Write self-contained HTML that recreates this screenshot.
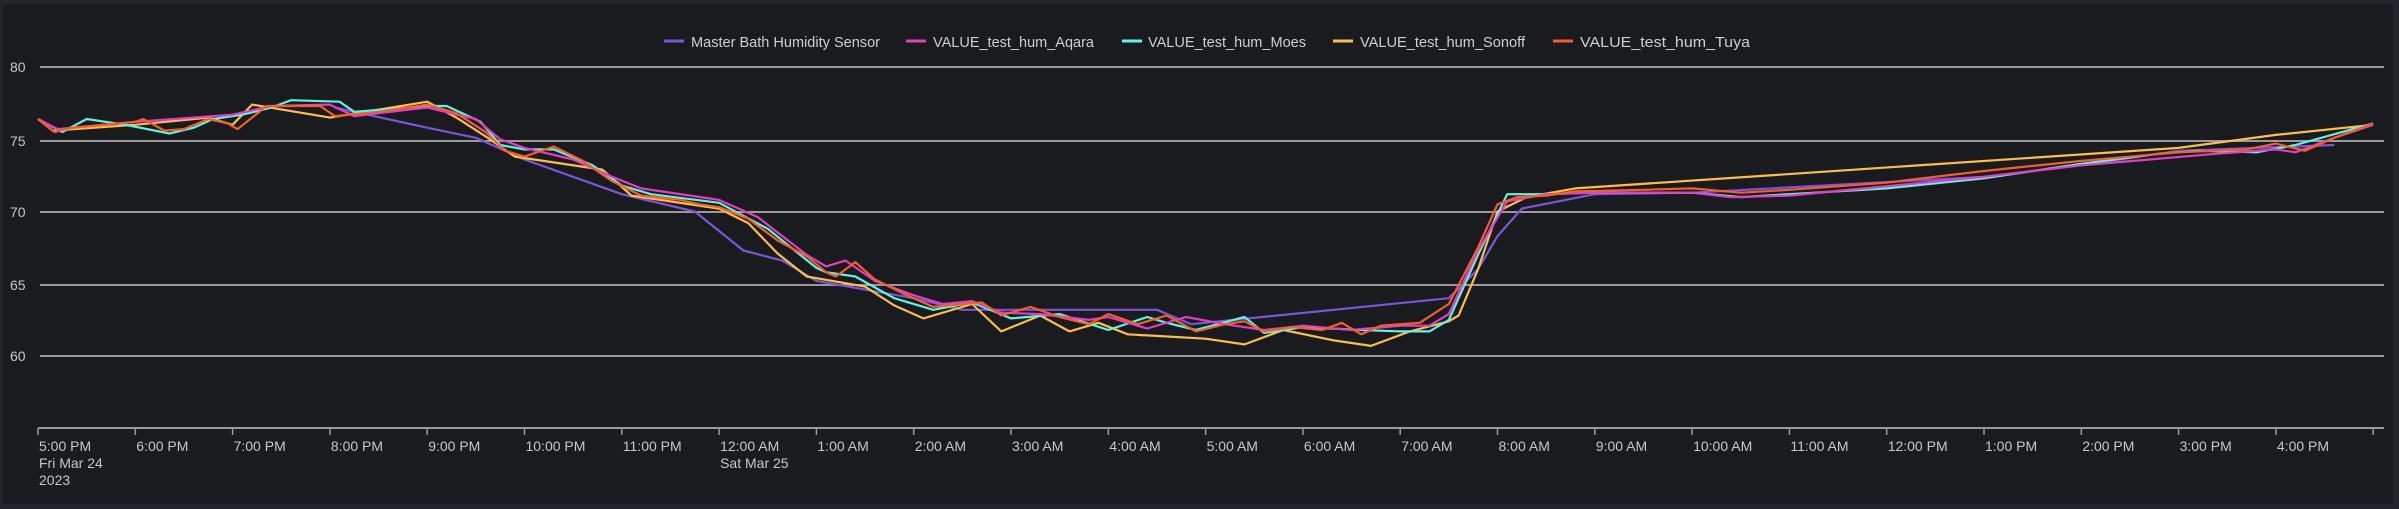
<!DOCTYPE html>
<html><head><meta charset="utf-8"><style>
html,body{margin:0;padding:0;background:#22252a;}
body{width:2399px;height:509px;overflow:hidden;position:relative;font-family:"Liberation Sans",sans-serif;}
#panel{position:absolute;left:3px;top:4px;width:2390px;height:500px;background:#1a1b1e;}
svg{position:absolute;left:0;top:0;}
</style></head><body>
<div id="panel"></div>
<svg id="c" width="2399" height="509" xmlns="http://www.w3.org/2000/svg" font-family="Liberation Sans, sans-serif">
<g stroke="#9a9a9a" stroke-width="2">
<line x1="40" y1="67" x2="2384" y2="67"/>
<line x1="40" y1="141" x2="2384" y2="141"/>
<line x1="40" y1="212" x2="2384" y2="212"/>
<line x1="40" y1="285" x2="2384" y2="285"/>
<line x1="40" y1="356" x2="2384" y2="356"/>
<line x1="38" y1="428" x2="2384" y2="428"/>
</g>
<g fill="#c8c8c8" font-size="14">
<text x="10" y="72">80</text><text x="10" y="146">75</text><text x="10" y="217">70</text><text x="10" y="290">65</text><text x="10" y="361">60</text>
</g>
<g id="ticks" stroke="#9a9a9a" stroke-width="1.5"></g>
<g id="lbl" fill="#c8c8c8" font-size="14"></g>
<g id="lines" fill="none" stroke-width="2.2" stroke-linejoin="round"></g>
<g font-size="15" fill="#cfcfcf">
<line x1="664" y1="41" x2="684" y2="41" stroke="#7b55d8" stroke-width="3"/><text x="691" y="47" textLength="189" lengthAdjust="spacingAndGlyphs">Master Bath Humidity Sensor</text>
<line x1="906" y1="41" x2="926" y2="41" stroke="#e040c0" stroke-width="3"/><text x="933" y="47" textLength="161" lengthAdjust="spacingAndGlyphs">VALUE_test_hum_Aqara</text>
<line x1="1122" y1="41" x2="1142" y2="41" stroke="#5ff3e4" stroke-width="3"/><text x="1148" y="47" textLength="158" lengthAdjust="spacingAndGlyphs">VALUE_test_hum_Moes</text>
<line x1="1333" y1="41" x2="1353" y2="41" stroke="#fbbd4e" stroke-width="3"/><text x="1360" y="47" textLength="165" lengthAdjust="spacingAndGlyphs">VALUE_test_hum_Sonoff</text>
<line x1="1553" y1="41" x2="1573" y2="41" stroke="#f25f2a" stroke-width="3"/><text x="1580" y="47" textLength="170" lengthAdjust="spacingAndGlyphs">VALUE_test_hum_Tuya</text>
</g>
</svg>
<script>
var NS="http://www.w3.org/2000/svg";
function X(t){return 38+97.3*t;}function Y(v){return 356-(v-60)*14.45;}
var labels=["5:00 PM","6:00 PM","7:00 PM","8:00 PM","9:00 PM","10:00 PM","11:00 PM","12:00 AM","1:00 AM","2:00 AM","3:00 AM","4:00 AM","5:00 AM","6:00 AM","7:00 AM","8:00 AM","9:00 AM","10:00 AM","11:00 AM","12:00 PM","1:00 PM","2:00 PM","3:00 PM","4:00 PM",""];
var tg=document.getElementById("ticks"),lg=document.getElementById("lbl");
function txt(x,y,s){var e=document.createElementNS(NS,"text");e.setAttribute("x",x);e.setAttribute("y",y);e.textContent=s;lg.appendChild(e);}
for(var i=0;i<=24;i++){var x=X(i);var l=document.createElementNS(NS,"line");l.setAttribute("x1",x);l.setAttribute("x2",x);l.setAttribute("y1",428);l.setAttribute("y2",435);tg.appendChild(l);if(labels[i])txt(x+1,451,labels[i]);}
txt(39,468,"Fri Mar 24");txt(39,485,"2023");txt(X(7)+1,468,"Sat Mar 25");
var S={
"#7b55d8":[[3.05,77.2],[4,75.8],[4.5,75.1],[5,73.6],[6,71.2],[6.75,70],[7.25,67.3],[7.65,66.6],[8,65.2],[9,64],[9.5,63.2],[11.5,63.2],[11.85,62.2],[14.5,64],[14.8,66],[15,68.3],[15.25,70.2],[16,71.2],[17,71.3],[20,72.4],[21,73.2],[22,74.2],[23.6,74.6]],
"#fbbd4e":[[0,76.4],[0.15,75.6],[1,76],[1.75,76.5],[2,76],[2.2,77.4],[3,76.5],[4,77.6],[4.3,76.5],[4.6,75.2],[4.9,73.8],[5.8,72.9],[6.1,71.1],[7,70.2],[7.3,69.2],[7.6,67.1],[7.9,65.5],[8.5,64.8],[8.8,63.5],[9.1,62.6],[9.6,63.6],[9.9,61.7],[10.3,62.8],[10.6,61.7],[10.9,62.3],[11.2,61.5],[12,61.2],[12.4,60.8],[12.8,61.8],[13.3,61.1],[13.7,60.7],[14.1,61.7],[14.5,62.4],[14.6,62.8],[14.8,66],[15,70],[15.3,71],[15.8,71.6],[22,74.4],[23,75.3],[24,76]],
"#5ff3e4":[[0,76.4],[0.25,75.5],[0.5,76.4],[0.9,76],[1.35,75.4],[1.6,75.8],[1.8,76.4],[2.1,76.7],[2.4,77.2],[2.6,77.7],[3.1,77.6],[3.25,76.9],[4,77.3],[4.2,77.3],[4.55,76.2],[4.75,74.6],[5,74.3],[5.3,74.3],[5.7,73.2],[6,71.8],[6.3,71.2],[7,70.6],[7.5,68.8],[8,66.1],[8.1,65.8],[8.4,65.5],[8.8,64],[9.2,63.2],[9.6,63.7],[10,62.6],[10.5,62.9],[11,61.8],[11.4,62.7],[11.6,62.3],[11.9,61.8],[12.4,62.7],[12.6,61.6],[13,62],[13.6,61.8],[14,61.7],[14.3,61.7],[14.5,62.5],[14.8,67],[15.1,71.2],[15.5,71.2],[16,71.3],[17,71.3],[17.5,71],[18,71.2],[19,71.6],[20,72.3],[21,73.3],[21.8,74],[22.2,74.2],[22.8,74.1],[23.2,74.6],[24,76.1]],
"#e040c0":[[0,76.4],[0.2,75.7],[1,76.2],[2,76.7],[2.4,77.3],[3,77.4],[3.25,76.6],[4,77.2],[4.5,76.4],[4.75,75],[5,74.4],[5.5,73.6],[5.9,72.4],[6.2,71.6],[7,70.8],[7.4,69.6],[7.9,67],[8.1,66.2],[8.3,66.6],[8.6,65.2],[9,64.2],[9.3,63.6],[9.6,63.8],[9.9,63],[10.3,62.9],[10.8,62.5],[11,62.7],[11.4,61.9],[11.8,62.7],[12.2,62.2],[12.6,61.8],[13,62.1],[13.5,61.8],[14,62.1],[14.3,62.1],[14.5,62.9],[14.8,67.3],[15.1,70.7],[15.5,71.2],[16,71.3],[17,71.3],[17.4,71],[18,71.1],[20,72.4],[21,73.2],[22.4,74],[23,74.3],[23.2,74.1],[23.6,75.1],[24,76]],
"#f25f2a":[[0,76.4],[0.17,75.5],[0.35,75.8],[1,76.2],[1.08,76.4],[1.3,75.6],[1.5,75.7],[1.75,76.4],[1.95,76.1],[2.05,75.7],[2.35,77.3],[2.9,77.3],[3.05,76.6],[3.5,76.9],[4,77.4],[4.3,76.8],[4.6,75.5],[4.8,74.2],[5,73.8],[5.3,74.5],[5.6,73.5],[5.9,72.1],[6.2,71.1],[6.6,70.8],[6.8,70.5],[7,70.3],[7.3,69.5],[7.6,68],[7.9,66.9],[8.1,65.8],[8.2,65.5],[8.4,66.5],[8.6,65.3],[8.9,64.3],[9.2,63.4],[9.5,63.6],[9.7,63.7],[9.9,62.8],[10.2,63.4],[10.5,62.7],[10.8,62.2],[11,62.9],[11.3,62.2],[11.6,62.8],[11.9,61.7],[12.2,62.2],[12.4,62.4],[12.6,61.7],[12.9,62],[13.2,61.8],[13.4,62.3],[13.6,61.5],[13.8,62.1],[14.2,62.3],[14.5,63.6],[14.8,67.5],[15,70.5],[15.2,71],[15.5,71.1],[15.8,71.4],[16.5,71.5],[17,71.6],[17.5,71.3],[18,71.5],[19,72],[20,72.8],[21,73.5],[22,74.1],[22.7,74.3],[23,74.7],[23.3,74.2],[23.6,75.1],[24,76.1]]
};
var g=document.getElementById("lines");
for(var c in S){var p=document.createElementNS(NS,"polyline");p.setAttribute("stroke",c);p.setAttribute("points",S[c].map(function(a){return X(a[0]).toFixed(1)+","+Y(a[1]).toFixed(1);}).join(" "));g.appendChild(p);}
</script>
</body></html>
